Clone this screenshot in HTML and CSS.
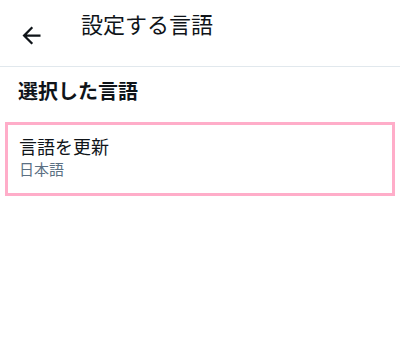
FILE: index.html
```html
<!DOCTYPE html>
<html lang="ja">
<head>
<meta charset="utf-8">
<link rel="stylesheet" href="styles.css">
</head>
<body>
<header class="header">
  <button class="back" aria-label="戻る">
    <svg viewBox="0 0 24 24" width="27" height="27"><path d="M20 11H7.83l5.59-5.59L12 4l-8 8 8 8 1.41-1.41L7.83 13H20v-2z" fill="#0f1419"/></svg>
  </button>
  <h1 class="title">設定する言語</h1>
</header>
<h2 class="section">選択した言語</h2>
<div class="card">
  <div class="card-title">言語を更新</div>
  <div class="card-sub">日本語</div>
</div>
</body>
</html>
```
FILE: styles.css
```css
html, body {
  margin: 0;
  padding: 0;
  background: #ffffff;
}
body {
  font-family: "Noto Sans CJK JP", "Noto Sans", sans-serif;
  color: #0f1419;
}
.header {
  display: flex;
  align-items: flex-start;
  border-bottom: 1px solid #e1e8ed;
  box-sizing: border-box;
  height: 67px;
}
.back {
  margin: 22px 0 0 18px;
  padding: 0;
  border: 0;
  background: none;
  width: 27px;
  height: 27px;
  display: flex;
}
.title {
  margin: 12px 0 0 36px;
  font-size: 22px;
  line-height: 22px;
  font-weight: 400;
}
.section {
  margin: 14px 0 0 18px;
  font-size: 20px;
  line-height: 20px;
  font-weight: 700;
}
.card {
  margin: 21px 5px 0 5px;
  border: 3px solid #ffadc9;
  height: 74px;
  box-sizing: border-box;
  padding: 12px 11px 0 11px;
}
.card-title {
  font-size: 18px;
  line-height: 18px;
}
.card-sub {
  margin-top: 6px;
  font-size: 15px;
  line-height: 15px;
  color: #5b7083;
}
```
